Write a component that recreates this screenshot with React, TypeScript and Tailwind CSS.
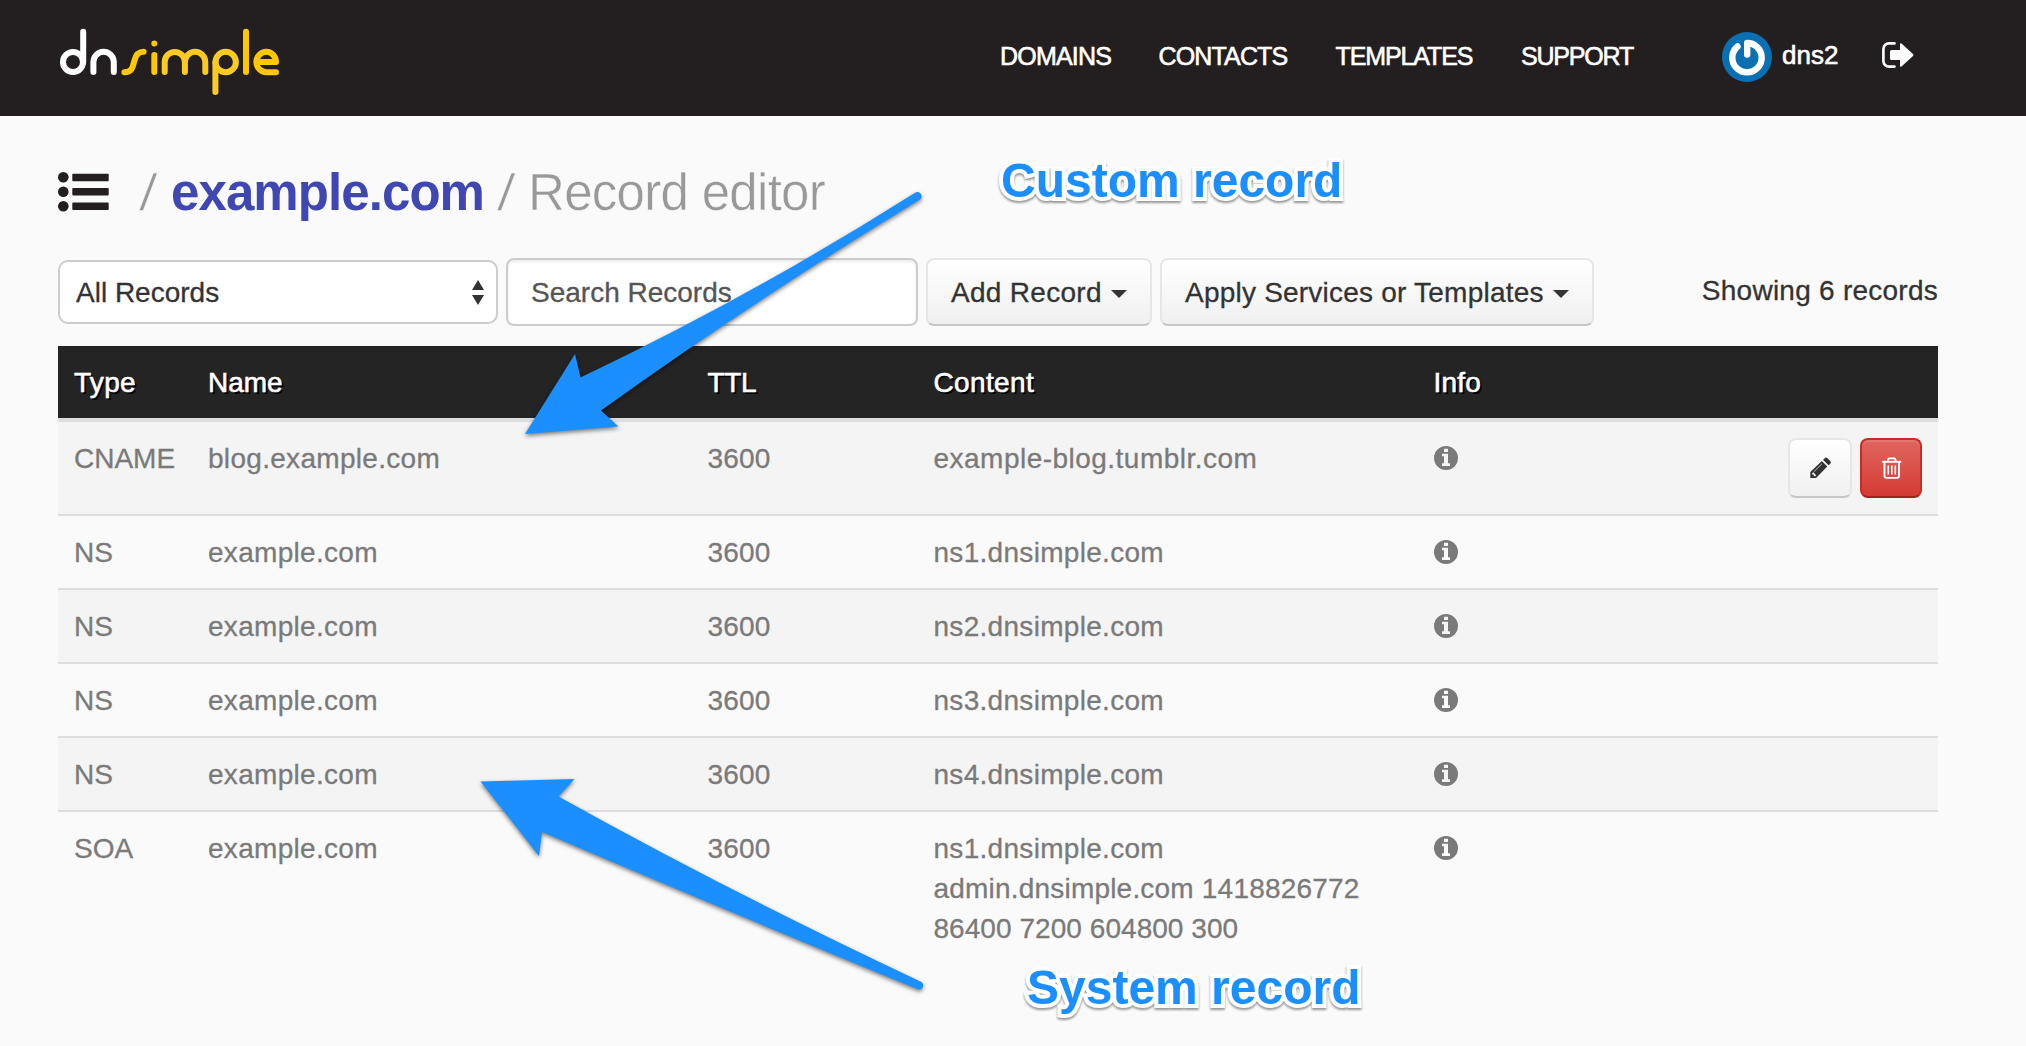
type DnsRecord = {
  type: string;
  name: string;
  ttl: string;
  content: { text: string; tracking: string }[];
  custom?: boolean;
};

const records: DnsRecord[] = [
  {
    type: "CNAME",
    name: "blog.example.com",
    ttl: "3600",
    content: [{ text: "example-blog.tumblr.com", tracking: "tracking-[0.480px]" }],
    custom: true,
  },
  { type: "NS", name: "example.com", ttl: "3600", content: [{ text: "ns1.dnsimple.com", tracking: "tracking-[0.300px]" }] },
  { type: "NS", name: "example.com", ttl: "3600", content: [{ text: "ns2.dnsimple.com", tracking: "tracking-[0.300px]" }] },
  { type: "NS", name: "example.com", ttl: "3600", content: [{ text: "ns3.dnsimple.com", tracking: "tracking-[0.300px]" }] },
  { type: "NS", name: "example.com", ttl: "3600", content: [{ text: "ns4.dnsimple.com", tracking: "tracking-[0.300px]" }] },
  {
    type: "SOA",
    name: "example.com",
    ttl: "3600",
    content: [
      { text: "ns1.dnsimple.com", tracking: "tracking-[0.300px]" },
      { text: "admin.dnsimple.com 1418826772", tracking: "tracking-[0.200px]" },
      { text: "86400 7200 604800 300", tracking: "tracking-[0.050px]" },
    ],
  },
];

const columns = "grid grid-cols-[134px_499.5px_226px_500px_1fr]";

function Logo() {
  return (
    <svg className="h-[72px] w-[224px]" viewBox="0 0 224 72" fill="none" strokeWidth="6" strokeLinecap="round" aria-label="dnsimple">
      <g stroke="#ffffff">
        <circle cx="15" cy="38" r="10" />
        <path d="M25.2 7.8V38" />
        <path d="M35.4 48V38a10.2 10.2 0 0 1 20.4 0V48" />
      </g>
      <g stroke="#ffc800">
        <path d="M66.4 48.2c8.6 0 8.4-6.4 10-11.6c1.5-5.6 3.6-8.8 9.2-8.8" />
        <path d="M96.3 31V48" />
        <path d="M188 7.8V48" />
        <path d="M203 38H218C217.6 32 213.500 27.800 208.500 27.800a10.200 10.200 0 0 0 0 20.400H218" strokeLinejoin="round" />
      </g>
      <circle cx="96.3" cy="19.6" r="3" fill="#ffc800" />
      <g stroke="#fbcb23">
        <path d="M106.700 48V38a10.100 10.100 0 0 1 20.200 0V48M126.900 38a10.200 10.200 0 0 1 20.400 0V48" />
        <circle cx="167.700" cy="38" r="10.200" />
        <path d="M157.400 38V68" />
      </g>
    </svg>
  );
}

function Avatar() {
  return (
    <svg className="size-[50px]" viewBox="0 0 50 50" fill="none">
      <circle cx="25" cy="25" r="25" fill="#0a6fb3" />
      <path d="M15.500 14.500A14.700 14.700 0 1 0 34.500 14.500Q31 11 25.200 11V22.500" stroke="#fff" strokeWidth="6.400" strokeLinecap="round" strokeLinejoin="round" />
    </svg>
  );
}

function SignOut() {
  return (
    <svg className="h-[26px] w-8" viewBox="0 0 32 26" fill="none">
      <path d="M12.500 1.400H7A5.600 5.600 0 0 0 1.400 7V19A5.600 5.600 0 0 0 7 24.600H12.500" stroke="#fff" strokeWidth="2.600" strokeLinecap="round" />
      <path d="M19.500 1.500L31 12Q32 13 31 14L19.500 24.500Q18 25.500 18 23.500V18H9.500Q8 18 8 16.500V9.500Q8 8 9.500 8H18V2.500Q18 .500 19.500 1.500Z" fill="#fff" />
    </svg>
  );
}

function ListIcon() {
  return (
    <svg className="h-10 w-[51px]" viewBox="0 0 51 40" fill="#231f20">
      <circle cx="5.300" cy="5.300" r="5.300" />
      <circle cx="5.300" cy="19.800" r="5.300" />
      <circle cx="5.300" cy="34.200" r="5.300" />
      <rect x="14.300" y="1.800" width="36.400" height="7.400" rx=".8" />
      <rect x="14.300" y="16" width="36.400" height="7.400" rx=".8" />
      <rect x="14.300" y="30.600" width="36.400" height="7.400" rx=".8" />
    </svg>
  );
}

function InfoIcon() {
  return (
    <svg className="mt-[7px] size-6" viewBox="0 0 24 24">
      <path
        fill="currentColor"
        fillRule="evenodd"
        d="M12 0A12 12 0 1 1 12 24A12 12 0 1 1 12 0ZM10 2.800V5.900H14V2.800ZM8 7.700V10.300H10V17.300H8V20H16V17.300H14V7.700Z"
      />
    </svg>
  );
}

function Pencil() {
  return (
    <svg className="ml-[2px] size-[22px]" viewBox="0 0 22 22">
      <path d="M0.300 15L11.800 3.900L17.300 9.400L6 21H0.300Z" fill="#333" />
      <path d="M13 2.700L15 .900Q16.200 .100 17.400 1.200L20.300 4Q21.400 5.300 20.400 6.500L18.500 8.300Z" fill="#333" />
      <path d="M3.800 14.800L12 6.700" stroke="#bbb" strokeWidth="1" />
      <path d="M2.200 16.300V17.600H3.800V19.200H5.200L6.100 18.300L3.200 15.300Z" fill="#fff" />
    </svg>
  );
}

function Trash() {
  return (
    <svg className="ml-px size-[22px]" viewBox="0 0 22 22" fill="none" stroke="#fff">
      <path d="M1.200 4.800H20.200" strokeWidth="1.900" />
      <path d="M7 4.500V3Q7 1.300 8.700 1.300H12.900Q14.600 1.300 14.600 3V4.500" strokeWidth="1.700" />
      <path d="M3.500 5V18.800Q3.500 20.900 5.500 20.900H16Q18 20.900 18 18.800V5" strokeWidth="1.900" />
      <path d="M7.300 8.500V17.500M10.800 8.500V17.500M14.300 8.500V17.500" strokeWidth="1.600" />
    </svg>
  );
}

function Caret() {
  return <span className="mt-[2px] ml-[9px] border-x-8 border-t-8 border-x-transparent border-t-[#333]" />;
}

const button =
  "flex items-center rounded-lg border-2 border-[#e6e6e6] border-b-[#c6c6c6] bg-linear-to-b from-white to-[#f0f0f0]";

const callout =
  "absolute text-5xl leading-[60px] font-bold whitespace-nowrap text-[#1b8fff] [filter:drop-shadow(0_2px_1px_rgba(0,0,0,0.4))] [paint-order:stroke_fill] [-webkit-text-stroke:8px_white] [stroke-linejoin:round]";

export default function App() {
  return (
    <div className="relative h-[1046px] w-[2026px] overflow-hidden bg-[#fafafa] font-['Liberation_Sans',Arial,sans-serif] text-[28px] leading-10 text-[#333]">
      <header className="flex h-[116px] items-start bg-[#231f20] pl-[58px] text-white">
        <div className="w-[942px] pt-6">
          <Logo />
        </div>
        <nav className="grid grid-cols-[158.5px_177px_185.5px_201px] pt-[36px] text-[25px] [-webkit-text-stroke:0.6px_white]">
          <a className="tracking-[-0.800px]">DOMAINS</a>
          <a className="tracking-[-0.850px]">CONTACTS</a>
          <a className="tracking-[-1.100px]">TEMPLATES</a>
          <a className="tracking-[-1.200px]">SUPPORT</a>
        </nav>
        <div className="flex items-start pt-8">
          <Avatar />
          <span className="ml-[10px] pt-[3px] text-[26px] [-webkit-text-stroke:0.6px_white]">dns2</span>
          <span className="ml-[44px] pt-[10px]">
            <SignOut />
          </span>
        </div>
      </header>

      <main className="w-[1938px] pl-[58px]">
        <h1 className="flex h-[142px] items-start pt-[47px] text-[51px] leading-[60px] text-[#999]">
          <span className="w-[83px] pt-[9px]">
            <ListIcon />
          </span>
          <span className="w-[30px]">
            <span className="inline-block -skew-x-[6deg] [-webkit-text-stroke:0.5px_#fafafa]">/</span>
          </span>
          <b className="w-[328px] tracking-[-0.920px] text-[#4147b2]">example.com</b>
          <span className="w-[29px]">
            <span className="inline-block -skew-x-[6deg] [-webkit-text-stroke:0.5px_#fafafa]">/</span>
          </span>
          <span className="tracking-[-0.700px] [-webkit-text-stroke:0.5px_#fafafa]">Record editor</span>
        </h1>

        <div className="flex h-[88px] items-start gap-2 [-webkit-text-stroke:0.3px]">
          <div className="mt-[2px] flex h-16 w-[440px] items-center justify-between rounded-[10px] border-2 border-[#ccc] bg-white pr-3 pl-4">
            <span className="pt-[2px]">All Records</span>
            <svg className="h-[25px] w-3" viewBox="0 0 12 25" fill="#333">
              <path d="M6 0L12 10H0ZM6 25L12 15H0Z" />
            </svg>
          </div>
          <div className="flex h-[68px] w-[412px] items-center rounded-lg border-2 border-[#ccc] bg-white pt-[2px] pl-[23px] text-[#555] shadow-[inset_0_2px_3px_rgba(0,0,0,0.08)]">
            Search Records
          </div>
          <button className={`${button} h-[68px] w-[226px] pt-[2px] pl-[23px] tracking-[0.300px]`}>
            Add Record
            <Caret />
          </button>
          <button className={`${button} h-[68px] w-[434px] pt-[2px] pl-[23px] tracking-[0.220px]`}>
            Apply Services or Templates
            <Caret />
          </button>
          <span className="ml-auto pt-[13px] tracking-[0.250px]">Showing 6 records</span>
        </div>

        <section>
          <div className={`${columns} bg-[#242424] pt-[17px] pb-[15px] text-white [-webkit-text-stroke:0.6px_white] [text-shadow:2px_2px_0_#000]`}>
            <span className="pl-4 tracking-[0.300px]">Type</span>
            <span className="pl-4">Name</span>
            <span className="pl-4 tracking-[-0.300px]">TTL</span>
            <span className="pl-4 tracking-[0.350px]">Content</span>
            <span className="pl-4 tracking-[0.200px]">Info</span>
          </div>
          {records.map((record, index) => (
            <div
              key={index}
              className={`${columns} border-[#ddd] pt-[17px] pb-[15px] text-[#7a7a7a] [-webkit-text-stroke:0.3px] odd:bg-[#fafafa] even:bg-[#f4f4f4] ${record.custom ? "border-t-4" : "border-t-2"}`}
            >
              <span className="pl-4">{record.type}</span>
              <span className="pl-4 tracking-[0.300px]">{record.name}</span>
              <span className="pl-4 tracking-[0.150px]">{record.ttl}</span>
              <span className="pl-4">
                {record.content.map((line) => (
                  <span key={line.text} className={`block ${line.tracking}`}>
                    {line.text}
                  </span>
                ))}
              </span>
              <span className="flex items-start justify-between px-4">
                <InfoIcon />
                {record.custom && (
                  <span className="-mt-px mb-px flex gap-2">
                    <button className={`${button} h-[60px] w-16 justify-center`}>
                      <Pencil />
                    </button>
                    <button className="flex h-[60px] w-[62px] items-center justify-center rounded-lg border-2 border-[#c72c25] border-b-[#a3211c] bg-linear-to-b from-[#e0645f] to-[#d43a33] shadow-[inset_0_2px_0_rgba(255,255,255,0.12)]">
                      <Trash />
                    </button>
                  </span>
                )}
              </span>
            </div>
          ))}
        </section>
      </main>

      <svg
        className="pointer-events-none absolute inset-0 h-[1046px] w-[2026px] [filter:drop-shadow(0_2px_2px_rgba(0,0,0,0.5))]"
        viewBox="0 0 2026 1046"
        fill="#1b8fff"
      >
        <path d="M525 434L575 354L580.500 377.500Q752 296 915.500 192.500A4.200 4.200 0 0 1 920 199.500Q750 303 601 410.500L618.500 426.500Z" />
        <path d="M480.500 781.500L574.500 779L558.500 796.500Q730 892 921.500 982A4.200 4.200 0 0 1 918.500 989.500Q715 906 542 832L539 856Z" />
      </svg>
      <span className={`${callout} top-[151px] left-[1001px]`}>Custom record</span>
      <span className={`${callout} top-[958px] left-[1027px]`}>System record</span>
    </div>
  );
}
